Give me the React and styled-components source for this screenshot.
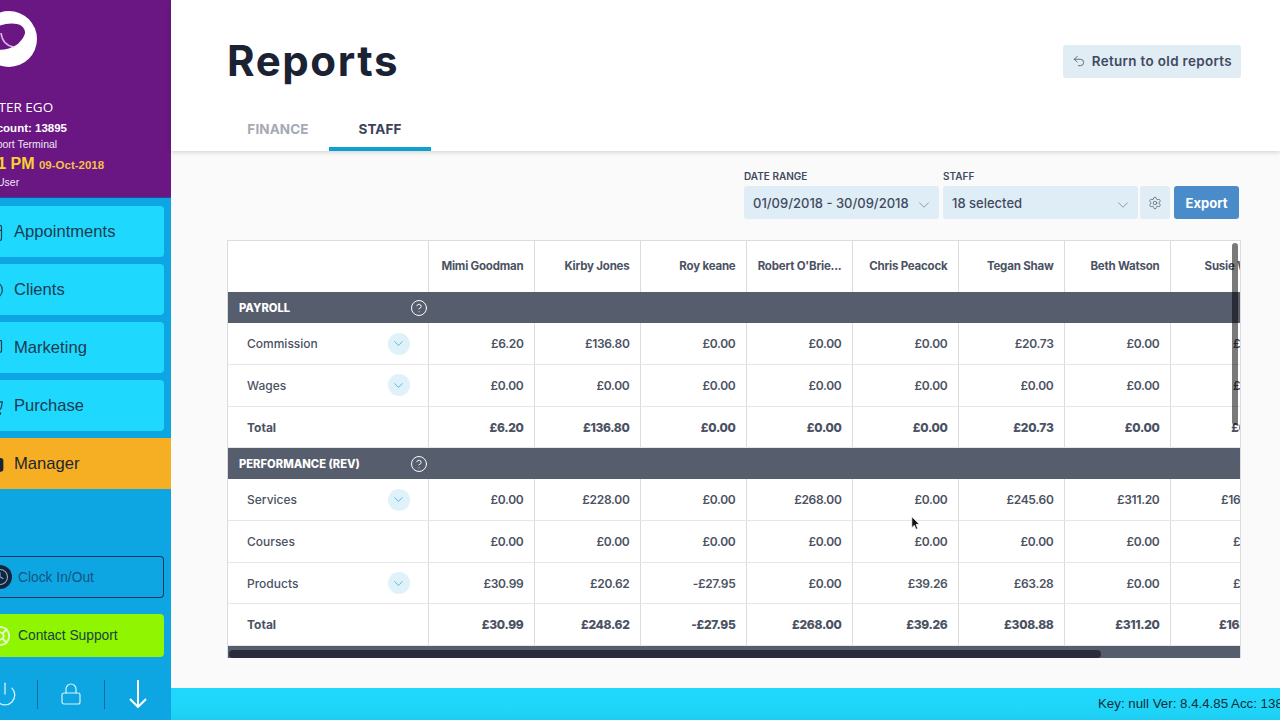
import React from 'react';
import styled, { createGlobalStyle } from 'styled-components';
import {
  CalendarCheck, CircleUser, Megaphone, ShoppingCart, Briefcase, Clock, LifeBuoy,
  Power, Lock, Undo2, Settings, ChevronDown, CircleHelp,
} from 'lucide-react';

const GlobalStyle = createGlobalStyle`
  html, body { margin: 0; padding: 0; height: 100%; overflow: hidden; }
  body { font-family: "Inter", "Liberation Sans", sans-serif; background: #fafafa; }
  * { box-sizing: border-box; }
`;

const staff = ['Mimi Goodman', 'Kirby Jones', 'Roy keane', "Robert O'Brie...", 'Chris Peacock', 'Tegan Shaw', 'Beth Watson', 'Susie Ward'];

const sections = [
  {
    title: 'PAYROLL',
    rows: [
      { label: 'Commission', expand: true, values: ['£6.20', '£136.80', '£0.00', '£0.00', '£0.00', '£20.73', '£0.00', '£0.00'] },
      { label: 'Wages', expand: true, values: ['£0.00', '£0.00', '£0.00', '£0.00', '£0.00', '£0.00', '£0.00', '£0.00'] },
      { label: 'Total', total: true, values: ['£6.20', '£136.80', '£0.00', '£0.00', '£0.00', '£20.73', '£0.00', '£0.00'] },
    ],
  },
  {
    title: 'PERFORMANCE (REV)',
    rows: [
      { label: 'Services', expand: true, values: ['£0.00', '£228.00', '£0.00', '£268.00', '£0.00', '£245.60', '£311.20', '£164.80'] },
      { label: 'Courses', values: ['£0.00', '£0.00', '£0.00', '£0.00', '£0.00', '£0.00', '£0.00', '£0.00'] },
      { label: 'Products', expand: true, values: ['£30.99', '£20.62', '-£27.95', '£0.00', '£39.26', '£63.28', '£0.00', '£0.00'] },
      { label: 'Total', total: true, values: ['£30.99', '£248.62', '-£27.95', '£268.00', '£39.26', '£308.88', '£311.20', '£164.80'] },
    ],
  },
  { title: 'PERFORMANCE (UNITS)', rows: [] },
];

const menu = [
  { label: 'Appointments', Icon: CalendarCheck },
  { label: 'Clients', Icon: CircleUser },
  { label: 'Marketing', Icon: Megaphone },
  { label: 'Purchase', Icon: ShoppingCart },
];

const App = () => (
  <Shell>
    <GlobalStyle />
    <Sidebar>
      <Account>
        <Logo viewBox="0 0 56 56">
          <circle cx="28" cy="28" r="28" fill="#fff" />
          <path d="M8 22C14 14 28 11 36 13c6 1 10 7 7 12-3 6-8 10-12 11-7 4-17 4-21-2z" fill="#6a1784" />
          <path d="M20 22c1 8 6 13 13 14" fill="none" stroke="#d9b8e6" strokeWidth="1.6" />
        </Logo>
        <BrandLine>ALTER EGO</BrandLine>
        <AccountLine>Account: 13895</AccountLine>
        <SmallLine $shift={-22} $gap={1}>Support Terminal</SmallLine>
        <TimeLine>3:41 PM <DateText>09-Oct-2018</DateText></TimeLine>
        <SmallLine $shift={-3} $gap={0}>User</SmallLine>
      </Account>
      <Nav>
        {menu.map(({ label, Icon }) => (
          <MenuButton key={label}>
            <MenuIcon><Icon size={20} strokeWidth={1.4} /></MenuIcon>
            {label}
          </MenuButton>
        ))}
        <ManagerRow>
          <MenuIcon><Briefcase size={20} strokeWidth={2.5} fill="#1c2633" /></MenuIcon>
          Manager
        </ManagerRow>
      </Nav>
      <Actions>
        <ClockButton>
          <ClockBadge><Clock size={18} strokeWidth={1.4} /></ClockBadge>
          Clock In/Out
        </ClockButton>
        <SupportButton>
          <SupportBadge><LifeBuoy size={22} strokeWidth={2} /></SupportBadge>
          Contact Support
        </SupportButton>
      </Actions>
      <IconRow>
        <IconCell $width={38} $offset={-28}><Power size={26} strokeWidth={1.2} /></IconCell>
        <IconCell $width={67}><Lock size={24} strokeWidth={1.2} /></IconCell>
        <IconCell $width={66} $last>
          <svg width="18" height="28" viewBox="0 0 18 28" fill="none" stroke="currentColor" strokeWidth="2">
            <path d="M9 0v27M1 19l8 8 8-8" />
          </svg>
        </IconCell>
      </IconRow>
    </Sidebar>

    <Main>
      <Header>
        <TitleRow>
          <Title>Reports</Title>
          <ReturnButton><Undo2 size={14} strokeWidth={1.3} />Return to old reports</ReturnButton>
        </TitleRow>
        <Tabs>
          <Tab>FINANCE</Tab>
          <Tab $active>STAFF</Tab>
        </Tabs>
      </Header>

      <Content>
        <Filters>
          <Field>
            <FieldLabel>DATE RANGE</FieldLabel>
            <Select>01/09/2018 - 30/09/2018<ChevronDown size={18} strokeWidth={0.9} /></Select>
          </Field>
          <Field>
            <FieldLabel>STAFF</FieldLabel>
            <Select>18 selected<ChevronDown size={18} strokeWidth={0.9} /></Select>
          </Field>
          <GearButton><Settings size={14} strokeWidth={1.2} /></GearButton>
          <ExportButton>Export</ExportButton>
        </Filters>

        <TableFrame>
          <ReportTable>
            <colgroup>
              <col width="200" />
              {staff.map((name) => <col key={name} width="106" />)}
            </colgroup>
            <thead>
              <tr>
                <HeadCell />
                {staff.map((name) => <HeadCell key={name}>{name}</HeadCell>)}
              </tr>
            </thead>
            {sections.map((section) => (
              <tbody key={section.title}>
                <tr>
                  <SectionCell colSpan={9}>
                    <SectionInner>
                      {section.title}
                      <HelpIcon><CircleHelp size={18} strokeWidth={1.3} /></HelpIcon>
                    </SectionInner>
                  </SectionCell>
                </tr>
                {section.rows.map((row) => (
                  <tr key={row.label}>
                    <LabelCell $total={row.total}>
                      <LabelInner>
                        {row.label}
                        {row.expand && <ExpandDot><ChevronDown size={15} strokeWidth={1.1} /></ExpandDot>}
                      </LabelInner>
                    </LabelCell>
                    {row.values.map((value, i) => <ValueCell key={i} $total={row.total}>{value}</ValueCell>)}
                  </tr>
                ))}
              </tbody>
            ))}
          </ReportTable>
          <VerticalThumb />
          <HorizontalThumb />
        </TableFrame>
      </Content>

      <Footer>Key: null Ver: 8.4.4.85 Acc: 13895</Footer>
    </Main>

    <Pointer viewBox="0 0 12 18">
      <path d="M1 1v13l3-3 2 5 2-1-2-5h4z" fill="#111" stroke="#fff" strokeWidth="0.8" />
    </Pointer>
  </Shell>
);

const Shell = styled.div`
  position: relative;
  display: flex;
  width: 1280px;
  height: 720px;
  overflow: hidden;
`;

const Sidebar = styled.aside`
  flex: 0 0 171px;
  display: flex;
  flex-direction: column;
  background: #0ea6e2;
  overflow: hidden;
  font-family: "Liberation Sans", Arial, sans-serif;
`;

const Account = styled.div`
  height: 198px;
  padding-top: 11px;
  background: #6a1784;
  color: #fff;
  border-bottom: 1px solid #1c4f9e;
`;

const Logo = styled.svg`
  display: block;
  width: 56px;
  height: 56px;
  margin-left: -19px;
`;

const BrandLine = styled.div`
  margin: 31px 0 0 -17px;
  font: 13.5px/18px "Open Sans", sans-serif;
  white-space: nowrap;
`;

const AccountLine = styled.div`
  margin: 4px 0 0 -18px;
  font-size: 11.5px;
  font-weight: 700;
  line-height: 16px;
  white-space: nowrap;
`;

const SmallLine = styled.div`
  margin: ${(p) => p.$gap}px 0 0 ${(p) => p.$shift}px;
  font-size: 10.5px;
  line-height: 14px;
  color: #f0e6f4;
  white-space: nowrap;
`;

const TimeLine = styled.div`
  margin: 0 0 0 -26px;
  padding-top: 3px;
  font-size: 16px;
  font-weight: 700;
  line-height: 20px;
  color: #fbd12e;
  white-space: nowrap;
`;

const DateText = styled.span`
  font-size: 11.5px;
  color: #f7bf4a;
`;

const Nav = styled.nav`
  display: flex;
  flex-direction: column;
  gap: 7px;
  padding-top: 8px;
`;

const MenuButton = styled.div`
  display: flex;
  align-items: center;
  width: 164px;
  height: 51px;
  background: #1ed9fd;
  border-radius: 0 4px 4px 0;
  font-size: 16.6px;
  color: #1d3a52;
`;

const ManagerRow = styled(MenuButton)`
  width: 171px;
  background: #f6ae22;
  border-radius: 0;
  color: #1c2633;
`;

const MenuIcon = styled.span`
  display: flex;
  flex: 0 0 20px;
  margin: 0 10px 0 -16px;
`;

const Actions = styled.div`
  display: flex;
  flex-direction: column;
  gap: 16px;
  margin-top: 67px;
`;

const ClockButton = styled.div`
  display: flex;
  align-items: center;
  width: 164px;
  height: 42px;
  border: 1px solid #12385e;
  border-left: 0;
  border-radius: 0 4px 4px 0;
  font-size: 13.8px;
  color: #12557f;
`;

const ClockBadge = styled.span`
  display: flex;
  align-items: center;
  justify-content: center;
  flex: 0 0 24px;
  height: 24px;
  margin: 0 6px 0 -12px;
  border-radius: 50%;
  background: #14233c;
  color: #7fb7d8;
`;

const SupportButton = styled.div`
  display: flex;
  align-items: center;
  width: 164px;
  height: 43px;
  background: #8ff500;
  border-radius: 0 4px 4px 0;
  font-size: 13.8px;
  color: #17443c;
`;

const SupportBadge = styled.span`
  display: flex;
  flex: 0 0 22px;
  margin: 0 7px 0 -11px;
  color: #e9fbd0;
`;

const IconRow = styled.div`
  display: flex;
  align-items: center;
  margin-top: 22px;
  height: 30px;
  color: #d4f2fc;
`;

const IconCell = styled.div`
  display: flex;
  align-items: center;
  justify-content: center;
  flex: 0 0 ${(p) => p.$width}px;
  height: 29px;
  border-right: ${(p) => (p.$last ? '0' : '1px solid #156a9c')};
  color: ${(p) => (p.$last ? '#fff' : '#d4f2fc')};
  svg { flex: none; margin-left: ${(p) => p.$offset || 0}px; }
`;

const Main = styled.main`
  flex: 1;
  display: flex;
  flex-direction: column;
  min-width: 0;
`;

const Header = styled.header`
  position: relative;
  height: 151px;
  padding: 0 39px 0 56px;
  background: #fff;
  box-shadow: 0 1px 5px rgba(0, 0, 0, 0.18);
`;

const TitleRow = styled.div`
  display: flex;
  align-items: center;
  justify-content: space-between;
  height: 122px;
`;

const Title = styled.h1`
  margin: -2px 0 0;
  font-size: 42px;
  font-weight: 700;
  letter-spacing: 1.6px;
  color: #1a2233;
`;

const ReturnButton = styled.div`
  display: flex;
  align-items: center;
  gap: 6px;
  height: 33px;
  padding: 0 9px;
  background: #e0edf5;
  border-radius: 3px;
  font-size: 13.4px;
  letter-spacing: 0.35px;
  font-weight: 600;
  color: #3f4a5e;
`;

const Tabs = styled.div`
  display: flex;
`;

const Tab = styled.div`
  width: 102px;
  height: 29px;
  text-align: center;
  font-size: 13.5px;
  letter-spacing: 0.1px;
  line-height: 14px;
  font-weight: 700;
  color: ${(p) => (p.$active ? '#3c4358' : '#a6a9b5')};
  border-bottom: 4px solid ${(p) => (p.$active ? '#119fcf' : 'transparent')};
`;

const Content = styled.div`
  flex: 1;
  padding: 18px 39px 0 56px;
`;

const Filters = styled.div`
  display: flex;
  justify-content: flex-end;
  align-items: flex-end;
  height: 50px;
  margin-right: 2px;
`;

const Field = styled.div`
  display: flex;
  flex-direction: column;
  margin-right: 4px;
`;

const FieldLabel = styled.label`
  font-size: 10px;
  line-height: 14px;
  margin-bottom: 3px;
  font-weight: 600;
  color: #3f4a5e;
`;

const Select = styled.div`
  display: flex;
  align-items: center;
  justify-content: space-between;
  width: 195px;
  height: 33px;
  padding: 0 6px 0 9px;
  background: #dfedf6;
  border-radius: 3px;
  font-size: 13px;
  font-weight: 500;
  color: #3f4a5e;
  svg { margin-top: 4px; color: #67727f; }
`;

const GearButton = styled.div`
  display: flex;
  align-items: center;
  justify-content: center;
  width: 30px;
  height: 33px;
  margin: 0 4px 0 -2px;
  background: #e0edf5;
  border-radius: 3px;
  color: #4a5568;
`;

const ExportButton = styled.div`
  display: flex;
  align-items: center;
  justify-content: center;
  width: 65px;
  height: 33px;
  background: #4a8cca;
  border-radius: 3px;
  font-size: 13px;
  font-weight: 700;
  color: #fff;
`;

const TableFrame = styled.div`
  position: relative;
  height: 418px;
  margin-top: 21px;
  border: 1px solid #dcdcdc;
  border-bottom: 0;
  background: #fff;
  overflow: hidden;
`;

const ReportTable = styled.table`
  width: 1048px;
  table-layout: fixed;
  border-collapse: collapse;
  font-size: 11.5px;
  color: #4b5263;
`;

const HeadCell = styled.th`
  height: 51px;
  padding: 0 10px 2px 0;
  border-left: 1px solid #dcdcdc;
  text-align: right;
  font-weight: 700;
  letter-spacing: -0.2px;
  white-space: nowrap;
  &:first-child { border-left: 0; }
`;

const SectionCell = styled.td`
  height: 31px;
  padding: 0;
  background: #565d6d;
  font-size: 11.2px;
  font-weight: 800;
  color: #fff;
`;

const SectionInner = styled.div`
  display: flex;
  align-items: center;
  justify-content: space-between;
  width: 200px;
  padding: 0 0 0 11px;
  white-space: nowrap;
`;

const HelpIcon = styled.span`
  display: flex;
`;

const LabelCell = styled.td`
  height: 41.67px;
  padding: 0 18px 0 19px;
  border-bottom: 1px solid #e6e6e6;
  font-size: 12px;
  font-weight: ${(p) => (p.$total ? 700 : 500)};
`;

const LabelInner = styled.div`
  display: flex;
  align-items: center;
  justify-content: space-between;
`;

const ExpandDot = styled.span`
  display: flex;
  align-items: center;
  justify-content: center;
  width: 22px;
  height: 22px;
  border-radius: 50%;
  background: #dff1f9;
  color: #1b9fc4;
`;

const ValueCell = styled.td`
  padding: 0 10px 0 0;
  border-left: 1px solid #dcdcdc;
  border-bottom: 1px solid #e6e6e6;
  text-align: right;
  font-size: 12px;
  letter-spacing: -0.3px;
  font-weight: ${(p) => (p.$total ? 800 : 600)};
`;

const VerticalThumb = styled.div`
  position: absolute;
  top: 2px;
  right: 2px;
  width: 6px;
  height: 182px;
  border-radius: 3px;
  background: rgba(0, 0, 0, 0.52);
`;

const HorizontalThumb = styled.div`
  position: absolute;
  left: 1px;
  bottom: 0;
  width: 872px;
  height: 8px;
  border-radius: 4px;
  background: #2a2d39;
`;

const Footer = styled.footer`
  height: 32px;
  padding: 8px 0 0 927px;
  background: linear-gradient(180deg, #20d8fb 0%, #1fd6f9 60%, #1dcdf2 100%);
  font: 13.3px/16px "Liberation Sans", Arial, sans-serif;
  color: #0f2d3a;
  white-space: nowrap;
  overflow: hidden;
`;

const Pointer = styled.svg`
  position: absolute;
  left: 911px;
  top: 516px;
  width: 10px;
  height: 15px;
`;

export default App;
